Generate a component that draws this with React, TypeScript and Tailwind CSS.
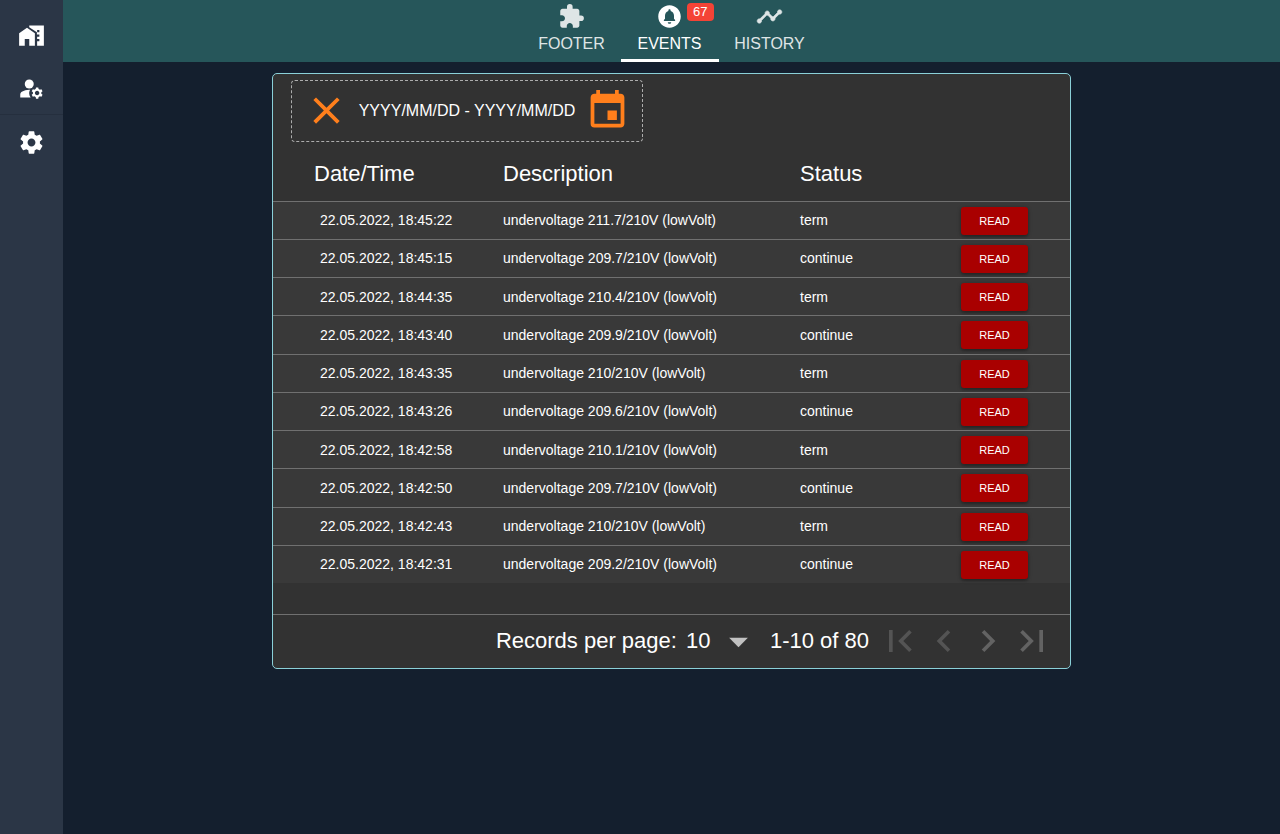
import { useState } from "react";
import {
  MdArrowDropDown,
  MdChevronLeft,
  MdChevronRight,
  MdCircleNotifications,
  MdClose,
  MdEvent,
  MdExtension,
  MdFirstPage,
  MdLastPage,
  MdManageAccounts,
} from "react-icons/md";

const events = [
  { time: "22.05.2022, 18:45:22", text: "undervoltage 211.7/210V (lowVolt)", status: "term" },
  { time: "22.05.2022, 18:45:15", text: "undervoltage 209.7/210V (lowVolt)", status: "continue" },
  { time: "22.05.2022, 18:44:35", text: "undervoltage 210.4/210V (lowVolt)", status: "term" },
  { time: "22.05.2022, 18:43:40", text: "undervoltage 209.9/210V (lowVolt)", status: "continue" },
  { time: "22.05.2022, 18:43:35", text: "undervoltage 210/210V (lowVolt)", status: "term" },
  { time: "22.05.2022, 18:43:26", text: "undervoltage 209.6/210V (lowVolt)", status: "continue" },
  { time: "22.05.2022, 18:42:58", text: "undervoltage 210.1/210V (lowVolt)", status: "term" },
  { time: "22.05.2022, 18:42:50", text: "undervoltage 209.7/210V (lowVolt)", status: "continue" },
  { time: "22.05.2022, 18:42:43", text: "undervoltage 210/210V (lowVolt)", status: "term" },
  { time: "22.05.2022, 18:42:31", text: "undervoltage 209.2/210V (lowVolt)", status: "continue" },
];

function Icon({ path, bold = false }: { path: string; bold?: boolean }) {
  return (
    <svg
      width={27}
      height={27}
      viewBox="0 0 24 24"
      fill="currentColor"
      stroke={bold ? "currentColor" : "none"}
      strokeWidth={0.5}
      aria-hidden="true"
    >
      <path d={path} />
    </svg>
  );
}

const homeWork =
  "M1 10v11h5v-6h4v6h5V10L8 5.2zM10 3v1.6l6.8 4.6V11H19v2h-2v2h2v2h-2v4h6V3H10zm9 6h-2V7h2v2z";
const settings =
  "M19.43 12.98c.04-.32.07-.64.07-.98s-.03-.66-.07-.98l2.11-1.65c.19-.15.24-.42.12-.64l-2-3.46c-.12-.22-.39-.3-.61-.22l-2.49 1c-.52-.4-1.08-.73-1.69-.98l-.38-2.65C14.46 2.18 14.25 2 14 2h-4c-.25 0-.46.18-.49.42l-.38 2.65c-.61.25-1.17.59-1.69.98l-2.49-1c-.23-.09-.49 0-.61.22l-2 3.46c-.13.22-.07.49.12.64l2.11 1.65c-.04.32-.07.65-.07.98s.03.66.07.98l-2.11 1.65c-.19.15-.24.42-.12.64l2 3.46c.12.22.39.3.61.22l2.49-1c.52.4 1.08.73 1.69.98l.38 2.65c.03.24.24.42.49.42h4c.25 0 .46-.18.49-.42l.38-2.65c.61-.25 1.17-.59 1.69-.98l2.49 1c.23.09.49 0 .61-.22l2-3.46c.12-.22.07-.49-.12-.64l-2.11-1.65zM12 15.5c-1.93 0-3.5-1.57-3.5-3.5s1.57-3.5 3.5-3.5 3.5 1.57 3.5 3.5-1.57 3.5-3.5 3.5z";
const timeline =
  "M23 8c0 1.1-.9 2-2 2-.18 0-.35-.02-.51-.07l-3.56 3.55c.05.16.07.34.07.52 0 1.1-.9 2-2 2s-2-.9-2-2c0-.18.02-.36.07-.52l-2.55-2.55c-.16.05-.34.07-.52.07s-.36-.02-.52-.07l-4.55 4.56c.05.16.07.33.07.51 0 1.1-.9 2-2 2s-2-.9-2-2 .9-2 2-2c.18 0 .35.02.51.07l4.56-4.55C8.02 9.36 8 9.18 8 9c0-1.1.9-2 2-2s2 .9 2 2c0 .18-.02.36-.07.52l2.55 2.55c.16-.05.34-.07.52-.07s.36.02.52.07l3.55-3.56C19.02 8.35 19 8.18 19 8c0-1.1.9-2 2-2s2 .9 2 2z";

function Sidebar() {
  return (
    <nav aria-label="Main" className="flex w-[63px] shrink-0 flex-col bg-[#2b3646] pt-[9px] text-white">
      <a href="#home" aria-label="Home" className="flex h-[52px] items-center justify-center">
        <Icon path={homeWork} />
      </a>
      <a
        href="#accounts"
        aria-label="Accounts"
        className="flex h-[54px] items-center justify-center border-b border-[#252f3e] pt-px"
      >
        <MdManageAccounts size={27} />
      </a>
      <a href="#settings" aria-label="Settings" className="flex h-[54px] items-center justify-center">
        <Icon path={settings} />
      </a>
    </nav>
  );
}

function TabBar() {
  return (
    <header className="flex h-[62px] justify-center bg-[#26565a] text-base leading-5 text-white">
      <a href="#footer" className="flex w-[98px] flex-col items-center gap-1 pt-[3px] opacity-85">
        <MdExtension size={27} />
        FOOTER
      </a>
      <a
        href="#events"
        aria-current="page"
        className="relative flex w-[98px] flex-col items-center gap-1 border-b-3 border-white pt-[3px]"
      >
        <MdCircleNotifications size={27} />
        EVENTS
        <span className="absolute top-[3px] right-[5px] h-[18px] rounded bg-[#f44336] px-1.5 text-[13px] leading-[18px]">
          67
        </span>
      </a>
      <a href="#history" className="flex w-[102px] flex-col items-center gap-1 pt-[3px] opacity-85">
        <Icon path={timeline} bold />
        HISTORY
      </a>
    </header>
  );
}

function DateFilter() {
  return (
    <div className="mt-1.5 ml-[18px] flex h-[62px] w-[352px] items-center rounded border border-dashed border-[#adadad] px-3 pb-px">
      <button type="button" aria-label="Clear dates" className="text-[#ff7f1c]">
        <MdClose size={45} />
      </button>
      <input
        aria-label="Date range"
        defaultValue="YYYY/MM/DD - YYYY/MM/DD"
        className="min-w-0 flex-1 bg-transparent text-center text-base text-white outline-none"
      />
      <button type="button" aria-label="Choose dates" className="text-[#ff7f1c]">
        <MdEvent size={45} />
      </button>
    </div>
  );
}

function EventsTable() {
  return (
    <table className="h-[441px] w-full table-fixed text-left">
      <colgroup>
        <col className="w-[230px]" />
        <col className="w-[297px]" />
        <col className="w-[161px]" />
        <col />
      </colgroup>
      <thead>
        <tr className="text-[22px] leading-8">
          <th className="h-[59px] pt-1.5 pl-[41px] font-normal">Date/Time</th>
          <th className="pt-1.5 font-normal">Description</th>
          <th className="pt-1.5 font-normal">Status</th>
          <th aria-label="Action" />
        </tr>
      </thead>
      <tbody>
        {events.map((event) => (
          <tr key={event.time} className="border-t border-[#707070] bg-[#393939] text-sm leading-4">
            <td className="pl-[47px]">{event.time}</td>
            <td>{event.text}</td>
            <td>{event.status}</td>
            <td className="pt-px">
              <button
                type="button"
                className="block h-7 w-[67px] rounded-[3px] bg-[#a90000] text-[11px] shadow-[0_1px_4px_rgba(0,0,0,0.3),0_2px_2px_rgba(0,0,0,0.15)]"
              >
                READ
              </button>
            </td>
          </tr>
        ))}
      </tbody>
    </table>
  );
}

function Pagination() {
  const [perPage, setPerPage] = useState("10");
  return (
    <div className="mt-[31px] flex h-[54px] items-center justify-end border-t border-[#707070] pr-4 pb-px text-[22px] leading-8">
      <label htmlFor="per-page">Records per page:</label>
      <div className="relative ml-[9px] flex items-center">
        <select
          id="per-page"
          value={perPage}
          onChange={(e) => setPerPage(e.target.value)}
          className="w-[75px] appearance-none bg-transparent outline-none"
        >
          <option>10</option>
          <option>20</option>
          <option>50</option>
        </select>
        <MdArrowDropDown size={45} className="pointer-events-none absolute right-0 text-[#c1c1c1]" />
      </div>
      <span className="mx-[9px]">1-10 of 80</span>
      <button type="button" aria-label="First page" disabled className="text-[#545454]">
        <MdFirstPage size={44} />
      </button>
      <button type="button" aria-label="Previous page" disabled className="text-[#545454]">
        <MdChevronLeft size={44} />
      </button>
      <button type="button" aria-label="Next page" className="text-[#636363]">
        <MdChevronRight size={44} />
      </button>
      <button type="button" aria-label="Last page" className="text-[#636363]">
        <MdLastPage size={44} />
      </button>
    </div>
  );
}

export default function App() {
  return (
    <div className="flex min-h-screen bg-[#141f2e] font-['Liberation_Sans',Arial,sans-serif] text-white">
      <Sidebar />
      <div className="flex min-w-0 flex-1 flex-col">
        <TabBar />
        <main className="flex justify-center pt-[11px]">
          <section
            aria-label="Events"
            className="w-full max-w-[799px] rounded-[5px] border border-[#8ad0d8] bg-[#323232]"
          >
            <DateFilter />
            <EventsTable />
            <Pagination />
          </section>
        </main>
      </div>
    </div>
  );
}
